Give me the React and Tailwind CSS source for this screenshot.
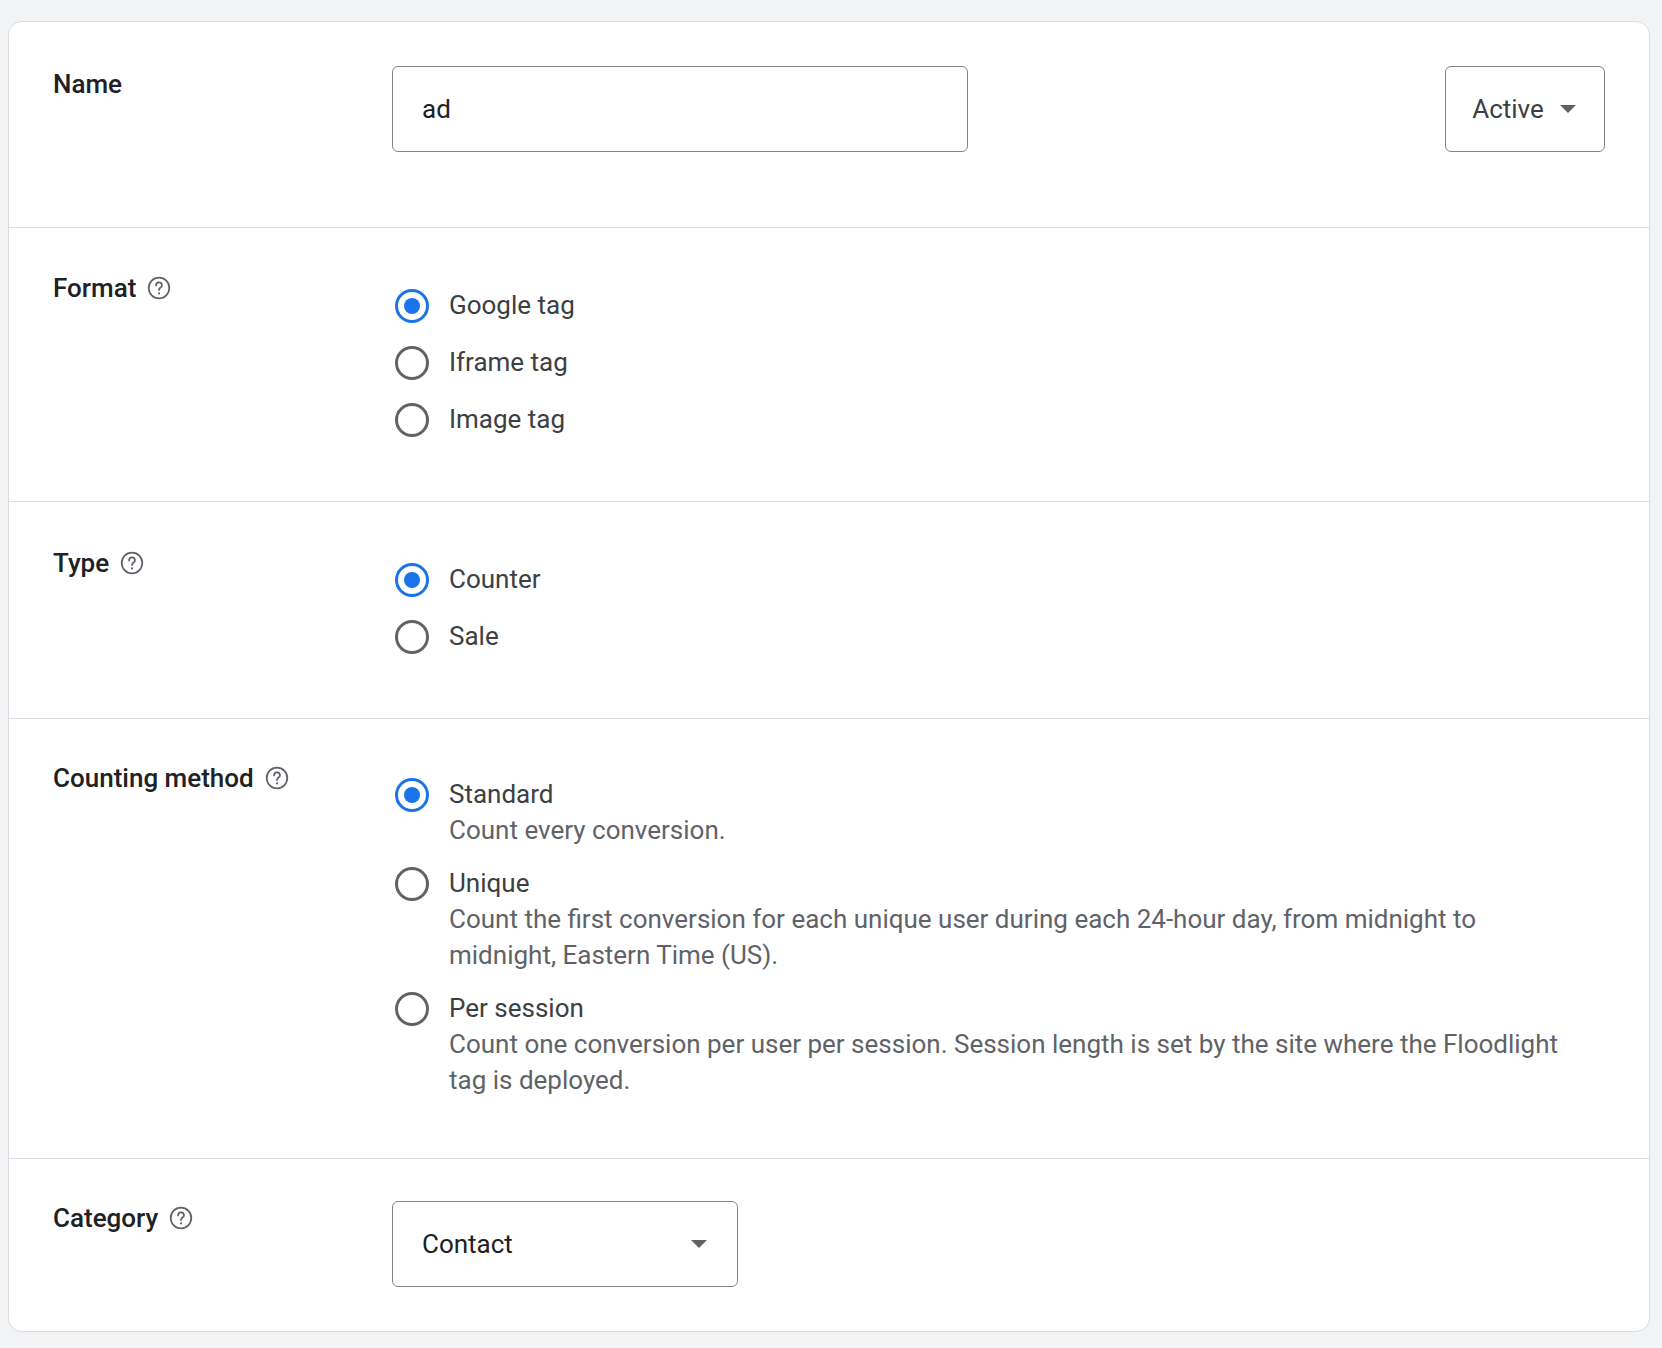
import React from 'react';

const Help = () => (
  <svg width="26" height="26" viewBox="0 0 24 24" className="text-[#5f6368] shrink-0">
    <circle cx="12" cy="12" r="9.5" fill="none" stroke="currentColor" strokeWidth="1.6" />
    <path d="M9.3 9.6a2.7 2.7 0 0 1 5.4 0c0 1.9-2.7 2.1-2.7 4.3" fill="none" stroke="currentColor" strokeWidth="1.6" strokeLinecap="round" />
    <circle cx="12" cy="17" r="1" fill="currentColor" />
  </svg>
);

const Caret = () => (
  <svg width="20" height="10" viewBox="0 0 20 10"><path d="M2 1h16l-8 8z" fill="#5f6368" /></svg>
);

function Radio({ checked, label, desc }) {
  return (
    <div className="flex items-start gap-[20px] pl-[3px]">
      <div className="h-[57px] flex items-center">
        <span className={`w-[34px] h-[34px] rounded-full border-[3px] flex items-center justify-center ${checked ? 'border-[#1a73e8]' : 'border-[#5f6368]'}`}>
          {checked && <span className="w-[16px] h-[16px] rounded-full bg-[#1a73e8]" />}
        </span>
      </div>
      <div className="pt-[10px]">
        <div className="text-[26px] leading-[36px] text-[#3c4043]">{label}</div>
        {desc && <div className="text-[26px] leading-[36px] text-[#5f6368] pb-[7px] pr-[40px]">{desc}</div>}
      </div>
    </div>
  );
}

function Section({ label, help, children, last, className = '' }) {
  return (
    <div className={`flex items-start px-[44px] ${last ? '' : 'border-b border-[#dadce0]'} ${className}`}>
      <div className="w-[339px] shrink-0 flex items-center gap-[10px] h-[36px] text-[26px] font-medium text-[#202124]">
        {label}
        {help && <Help />}
      </div>
      <div className="flex-1">{children}</div>
    </div>
  );
}

export default function App() {
  return (
    <div className="min-h-[1348px] bg-[#f1f3f4] pt-[21px] pl-[8px] pr-[12px] pb-[15px]" style={{ fontFamily: 'Roboto, "Liberation Sans", sans-serif' }}>
      <div className="bg-white border border-[#dadce0] rounded-[14px]">
        <Section label="Name" className="pt-[44px] pb-[75px]">
          <div className="flex justify-between">
            <div className="w-[576px] h-[86px] border border-[#80868b] rounded-[6px] flex items-center px-[29px] text-[26px] text-[#202124]">ad</div>
            <div className="w-[160px] h-[86px] border border-[#80868b] rounded-[6px] flex items-center justify-center gap-[14px] text-[26px] text-[#3c4043]">Active <Caret /></div>
          </div>
        </Section>
        <Section label="Format" help className="pt-[42px] pb-[53px]">
          <div className="mt-[7px]">
            <Radio checked label="Google tag" />
            <Radio label="Iframe tag" />
            <Radio label="Image tag" />
          </div>
        </Section>
        <Section label="Type" help className="pt-[43px] pb-[53px]">
          <div className="mt-[6px]">
            <Radio checked label="Counter" />
            <Radio label="Sale" />
          </div>
        </Section>
        <Section label="Counting method" help className="pt-[41px] pb-[53px]">
          <div className="mt-[6px]">
            <Radio checked label="Standard" desc="Count every conversion." />
            <Radio label="Unique" desc="Count the first conversion for each unique user during each 24-hour day, from midnight to midnight, Eastern Time (US)." />
            <Radio label="Per session" desc="Count one conversion per user per session. Session length is set by the site where the Floodlight tag is deployed." />
          </div>
        </Section>
        <Section label="Category" help last className="pt-[41px] pb-[44px]">
          <div className="mt-[1px]">
            <div className="w-[346px] h-[86px] border border-[#80868b] rounded-[6px] flex items-center justify-between pl-[29px] pr-[28px] text-[26px] text-[#202124]">Contact <Caret /></div>
          </div>
        </Section>
      </div>
    </div>
  );
}
